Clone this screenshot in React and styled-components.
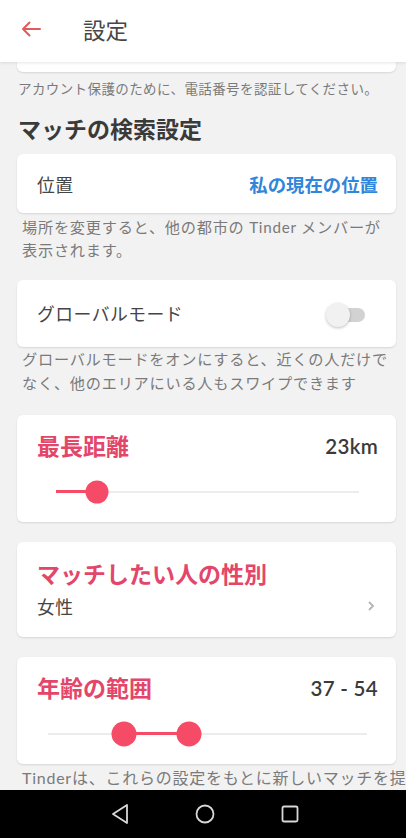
import styled, { createGlobalStyle } from 'styled-components';

const GlobalStyle = createGlobalStyle`
  html, body {
    margin: 0;
    padding: 0;
    height: 838px;
    overflow: hidden;
    background: #f2f2f2;
    font-family: Lato, "Noto Sans CJK JP", sans-serif;
  }
  #root {
    height: 100%;
  }
`;

const RED = '#e4466a';
const SLIDER = '#f54b66';

const Screen = styled.div`
  display: flex;
  flex-direction: column;
  height: 838px;
`;

const Header = styled.header`
  position: relative;
  z-index: 2;
  height: 62px;
  flex-shrink: 0;
  display: flex;
  align-items: center;
  background: #fff;
  box-shadow: 0 1px 3px rgba(0, 0, 0, 0.1);

  svg {
    margin-left: 21px;
    margin-top: -4px;
  }

  h1 {
    margin: 0 0 0 42px;
    margin-top: -5px;
    font-size: 22.5px;
    font-weight: 400;
    color: #474747;
  }
`;

const Scroll = styled.main`
  flex: 1;
  overflow: hidden;
  padding: 0 10px 0 17px;
`;

const Card = styled.section`
  background: #fff;
  border-radius: 6px;
  box-shadow: 0 1px 2px rgba(0, 0, 0, 0.12);
  margin-top: ${p => p.$gap || 0}px;
  height: ${p => p.$h}px;
  box-sizing: border-box;
  padding: ${p => p.$pad || '0 18px 0 20px'};
`;

const CutCard = styled(Card)`
  margin-top: -30px;
`;

const Note = styled.p`
  margin: ${p => p.$m || '0'};
  padding-left: ${p => p.$indent || 1}px;
  font-size: ${p => p.$size || 15.2}px;
  line-height: ${p => p.$lh || 23}px;
  letter-spacing: ${p => p.$ls ?? 0.75}px;
  color: #7a7a7a;
  white-space: nowrap;
`;

const SectionTitle = styled.h2`
  margin: 17px 0 0 1px;
  font-size: 23px;
  line-height: 28px;
  font-weight: 700;
  color: #3a3a3a;
`;

const Row = styled.div`
  display: flex;
  align-items: center;
  justify-content: space-between;
  height: 100%;
`;

const Label = styled.span`
  font-size: 17.8px;
  letter-spacing: 0.5px;
  color: #454545;
  margin-top: ${p => p.$dy || 0}px;
`;

const LinkValue = styled.span`
  font-size: 18.4px;
  font-weight: 700;
  color: #2f86da;
`;

const Toggle = styled.div`
  position: relative;
  width: 36px;
  height: 14px;
  border-radius: 7px;
  background: #d2d2d2;
  margin-right: 13px;
  margin-top: 3px;

  &::after {
    content: '';
    position: absolute;
    left: -3px;
    top: -5px;
    width: 24px;
    height: 24px;
    border-radius: 50%;
    background: #f1f1f1;
    box-shadow: 0 1px 3px rgba(0, 0, 0, 0.25);
  }
`;

const TitleRow = styled.div`
  display: flex;
  align-items: center;
  justify-content: space-between;
  height: 28px;
`;

const RedTitle = styled.h3`
  margin: 0;
  font-size: 23px;
  font-weight: 700;
  color: ${RED};
`;

const Value = styled.span`
  font-size: 20.5px;
  font-weight: 600;
  letter-spacing: 0.3px;
  color: #3a3a3a;
  margin-top: 2px;
`;

const Track = styled.div`
  position: relative;
  height: 2px;
  background: #ececec;
  margin: ${p => p.$m};
`;

const Fill = styled.div`
  position: absolute;
  top: -1px;
  height: 3px;
  background: ${SLIDER};
`;

const Thumb = styled.div`
  position: absolute;
  top: 1px;
  width: ${p => p.$d}px;
  height: ${p => p.$d}px;
  border-radius: 50%;
  background: ${SLIDER};
  transform: translate(-50%, -50%);
`;

const SubRow = styled.div`
  display: flex;
  align-items: center;
  justify-content: space-between;
  margin-top: 6px;
`;

const NavBar = styled.nav`
  height: 48px;
  flex-shrink: 0;
  background: #000;
  display: flex;
  align-items: center;
  justify-content: center;
  gap: 66px;
  padding-left: 4px;
`;

const Slider = ({ from, to, thumbs, margin, size }) => (
  <Track $m={margin}>
    <Fill style={{ left: `${from}%`, width: `${to - from}%` }} />
    {thumbs.map(t => (
      <Thumb key={t} $d={size} style={{ left: `${t}%` }} />
    ))}
  </Track>
);

export default function App() {
  return (
    <>
      <GlobalStyle />
      <Screen>
        <Header>
          <svg width="20" height="16" viewBox="0 0 20 16" fill="none" stroke="#e25a5a" strokeWidth="2" strokeLinecap="round" strokeLinejoin="round">
            <path d="M19 8H2M8.5 1.5L2 8l6.5 6.5" />
          </svg>
          <h1>設定</h1>
        </Header>

        <Scroll>
          <CutCard $h={40} />
          <Note $m="8px 0 0 0" $size={13.5} $lh={18} $ls={0.4}>
            アカウント保護のために、電話番号を認証してください。
          </Note>

          <SectionTitle>マッチの検索設定</SectionTitle>

          <Card $gap={11} $h={59}>
            <Row>
              <Label>位置</Label>
              <LinkValue>私の現在の位置</LinkValue>
            </Row>
          </Card>
          <Note $m="3px 0 0 0" $indent={5}>
            場所を変更すると、他の都市の Tinder メンバーが
            <br />
            表示されます。
          </Note>

          <Card $gap={18} $h={67}>
            <Row>
              <Label $dy={-2}>グローバルモード</Label>
              <Toggle />
            </Row>
          </Card>
          <Note $indent={5} $lh={24}>
            グローバルモードをオンにすると、近くの人だけで
            <br />
            なく、他のエリアにいる人もスワイプできます
          </Note>

          <Card $gap={20} $h={107} $pad="16px 18px 0 20px">
            <TitleRow>
              <RedTitle>最長距離</RedTitle>
              <Value>23km</Value>
            </TitleRow>
            <Slider from={0} to={13.6} thumbs={[13.6]} size={23} margin="32px 19px 0 19px" />
          </Card>

          <Card $gap={20} $h={95} $pad="17px 18px 0 20px">
            <TitleRow>
              <RedTitle>マッチしたい人の性別</RedTitle>
            </TitleRow>
            <SubRow>
              <Label>女性</Label>
              <svg width="8" height="12" viewBox="0 0 8 12" fill="none" stroke="#b5b5b5" strokeWidth="1.8" style={{ marginRight: 3 }}>
                <path d="M2 2l4 4-4 4" />
              </svg>
            </SubRow>
          </Card>

          <Card $gap={20} $h={107} $pad="16px 18px 0 20px">
            <TitleRow>
              <RedTitle>年齢の範囲</RedTitle>
              <Value>37 - 54</Value>
            </TitleRow>
            <Slider from={23.7} to={44.2} thumbs={[23.7, 44.2]} size={25} margin="32px 11px 0 11px" />
          </Card>

          <Note $m="4px 0 0 0" $size={16} $lh={20} $indent={5}>
            Tinderは、これらの設定をもとに新しいマッチを提案します。
          </Note>
        </Scroll>

        <NavBar>
          <svg width="18" height="22" viewBox="0 0 18 22" fill="none" stroke="#d8d8d8" strokeWidth="1.8" strokeLinejoin="round">
            <path d="M16 2L2 11l14 9z" />
          </svg>
          <svg width="20" height="20" viewBox="0 0 20 20" fill="none" stroke="#d8d8d8" strokeWidth="1.8">
            <circle cx="10" cy="10" r="8.5" />
          </svg>
          <svg width="18" height="18" viewBox="0 0 18 18" fill="none" stroke="#d8d8d8" strokeWidth="1.8">
            <rect x="1.5" y="1.5" width="15" height="15" rx="1.5" />
          </svg>
        </NavBar>
      </Screen>
    </>
  );
}
